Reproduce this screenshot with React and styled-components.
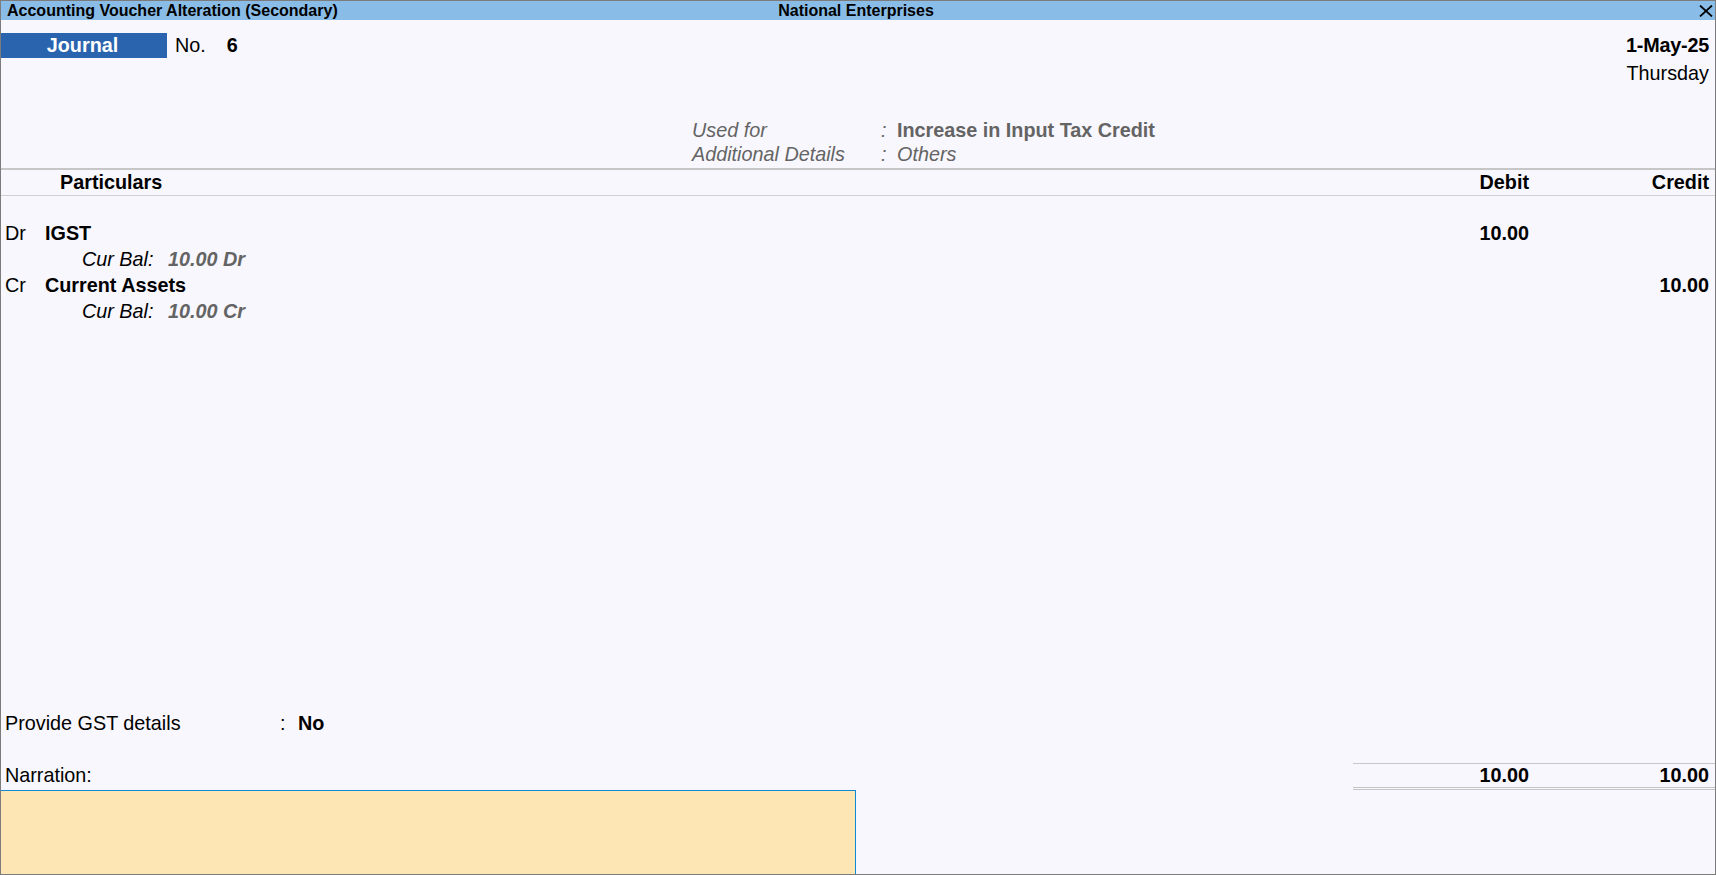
import React from "react";
import styled, { createGlobalStyle } from "styled-components";

const GlobalStyle = createGlobalStyle`
  html, body {
    margin: 0;
    padding: 0;
    height: 100%;
  }
  body {
    font-family: "Liberation Sans", Arial, sans-serif;
    background: #f8f7fd;
    color: #000;
  }
  * { box-sizing: border-box; }
`;

const Window = styled.div`
  width: 100vw;
  height: 100vh;
  border: 1px solid #7c7c7c;
  background: #f8f7fd;
  display: flex;
  flex-direction: column;
  overflow: hidden;
  font-size: 19.8px;
`;

const TitleBar = styled.div`
  height: 19px;
  flex: none;
  background: #89bce6;
  display: grid;
  grid-template-columns: 1fr auto 1fr;
  align-items: center;
  padding: 0 2px 0 6px;
  font-size: 16px;
  font-weight: bold;
  line-height: 19px;
`;

const TitleText = styled.span`
  justify-self: ${(p) => p.$align || "start"};
  margin-right: ${(p) => (p.$align === "center" ? "8px" : "0")};
`;

const CloseButton = styled.span`
  justify-self: end;
  display: flex;
  align-items: center;
  height: 19px;
`;

const HeaderRow = styled.div`
  display: flex;
  align-items: flex-start;
  margin-top: 13px;
  padding-right: 6px;
`;

const VoucherBadge = styled.div`
  width: 166px;
  height: 25px;
  line-height: 25px;
  background: #2b64ae;
  color: #fff;
  font-weight: bold;
  text-align: center;
  padding-right: 3px;
`;

const NoLabel = styled.span`
  margin-left: 8px;
  line-height: 25px;
`;

const NoValue = styled.span`
  margin-left: 21px;
  line-height: 25px;
  font-weight: bold;
`;

const DateBlock = styled.div`
  margin-left: auto;
  text-align: right;
  display: flex;
  flex-direction: column;
`;

const DateLine = styled.span`
  line-height: ${(p) => (p.$sub ? "31px" : "25px")};
  font-weight: ${(p) => (p.$bold ? "bold" : "normal")};
  letter-spacing: ${(p) => (p.$bold ? "-0.2px" : "0")};
`;

const InfoGrid = styled.div`
  display: grid;
  grid-template-columns: 189px 16px auto;
  grid-auto-rows: 24px;
  align-items: center;
  margin: 29px 0 2px 691px;
  color: #646464;
`;

const InfoLabel = styled.span`
  font-style: italic;
`;

const InfoColon = styled.span`
  font-style: italic;
`;

const InfoValue = styled.span`
  font-style: ${(p) => (p.$bold ? "normal" : "italic")};
  font-weight: ${(p) => (p.$bold ? "bold" : "normal")};
`;

const TableHeader = styled.div`
  display: grid;
  grid-template-columns: 1fr 176px 180px;
  height: 28px;
  align-items: center;
  border-top: 2px solid #c6c6c6;
  border-bottom: 1px solid #d0d0d0;
  padding-right: 6px;
  font-weight: bold;
`;

const HeadCell = styled.span`
  text-align: ${(p) => p.$align || "left"};
  padding-left: ${(p) => p.$indent || 0}px;
`;

const Entries = styled.div`
  margin-top: 24px;
  display: flex;
  flex-direction: column;
`;

const EntryRow = styled.div`
  display: grid;
  grid-template-columns: 40px 1fr 176px 180px;
  height: 26px;
  align-items: center;
  padding-left: 4px;
  padding-right: 6px;
`;

const DrCr = styled.span``;

const LedgerName = styled.span`
  font-weight: bold;
`;

const Amount = styled.span`
  text-align: right;
  font-weight: bold;
`;

const BalanceRow = styled.div`
  display: flex;
  height: 26px;
  align-items: center;
  padding-left: 81px;
  font-style: italic;
`;

const BalanceLabel = styled.span`
  width: 86px;
`;

const BalanceValue = styled.span`
  font-weight: bold;
  color: #646464;
`;

const Spacer = styled.div`
  flex: 1;
`;

const GstRow = styled.div`
  display: grid;
  grid-template-columns: 275px 18px auto;
  height: 26px;
  align-items: center;
  padding-left: 4px;
  margin-bottom: 27px;
`;

const GstValue = styled.span`
  font-weight: bold;
`;

const FooterRow = styled.div`
  display: flex;
  align-items: flex-start;
`;

const NarrationLabel = styled.span`
  flex: 1;
  padding-left: 4px;
  line-height: 25px;
`;

const Totals = styled.div`
  display: flex;
  border-top: 1px solid #c8c8c8;
  border-bottom: 3px double #c4c4c4;
`;

const TotalCell = styled.span`
  width: ${(p) => p.$w}px;
  padding-right: ${(p) => p.$pr || 0}px;
  text-align: right;
  font-weight: bold;
  line-height: 23px;
`;

const NarrationBox = styled.div`
  width: 855px;
  flex: none;
  height: 84px;
  background: #fde6b3;
  border-top: 1px solid #0e89d5;
  border-right: 1px solid #0e89d5;
`;

function CloseIcon() {
  return (
    <svg width="14" height="12" viewBox="0 0 14 12">
      <path d="M1 0.5 L13 11.5 M13 0.5 L1 11.5" stroke="#000" strokeWidth="1.7" fill="none" />
    </svg>
  );
}

const entries = [
  { type: "Dr", name: "IGST", debit: "10.00", credit: "", bal: "10.00 Dr" },
  { type: "Cr", name: "Current Assets", debit: "", credit: "10.00", bal: "10.00 Cr" },
];

export default function App() {
  return (
    <>
      <GlobalStyle />
      <Window>
        <TitleBar>
          <TitleText>Accounting Voucher Alteration (Secondary)</TitleText>
          <TitleText $align="center">National Enterprises</TitleText>
          <CloseButton>
            <CloseIcon />
          </CloseButton>
        </TitleBar>

        <HeaderRow>
          <VoucherBadge>Journal</VoucherBadge>
          <NoLabel>No.</NoLabel>
          <NoValue>6</NoValue>
          <DateBlock>
            <DateLine $bold>1-May-25</DateLine>
            <DateLine $sub>Thursday</DateLine>
          </DateBlock>
        </HeaderRow>

        <InfoGrid>
          <InfoLabel>Used for</InfoLabel>
          <InfoColon>:</InfoColon>
          <InfoValue $bold>Increase in Input Tax Credit</InfoValue>
          <InfoLabel>Additional Details</InfoLabel>
          <InfoColon>:</InfoColon>
          <InfoValue>Others</InfoValue>
        </InfoGrid>

        <TableHeader>
          <HeadCell $indent={59}>Particulars</HeadCell>
          <HeadCell $align="right">Debit</HeadCell>
          <HeadCell $align="right">Credit</HeadCell>
        </TableHeader>

        <Entries>
          {entries.map((e) => (
            <React.Fragment key={e.name}>
              <EntryRow>
                <DrCr>{e.type}</DrCr>
                <LedgerName>{e.name}</LedgerName>
                <Amount>{e.debit}</Amount>
                <Amount>{e.credit}</Amount>
              </EntryRow>
              <BalanceRow>
                <BalanceLabel>Cur Bal:</BalanceLabel>
                <BalanceValue>{e.bal}</BalanceValue>
              </BalanceRow>
            </React.Fragment>
          ))}
        </Entries>

        <Spacer />

        <GstRow>
          <span>Provide GST details</span>
          <span>:</span>
          <GstValue>No</GstValue>
        </GstRow>

        <FooterRow>
          <NarrationLabel>Narration:</NarrationLabel>
          <Totals>
            <TotalCell $w={176}>10.00</TotalCell>
            <TotalCell $w={186} $pr={6}>10.00</TotalCell>
          </Totals>
        </FooterRow>

        <NarrationBox />
      </Window>
    </>
  );
}
